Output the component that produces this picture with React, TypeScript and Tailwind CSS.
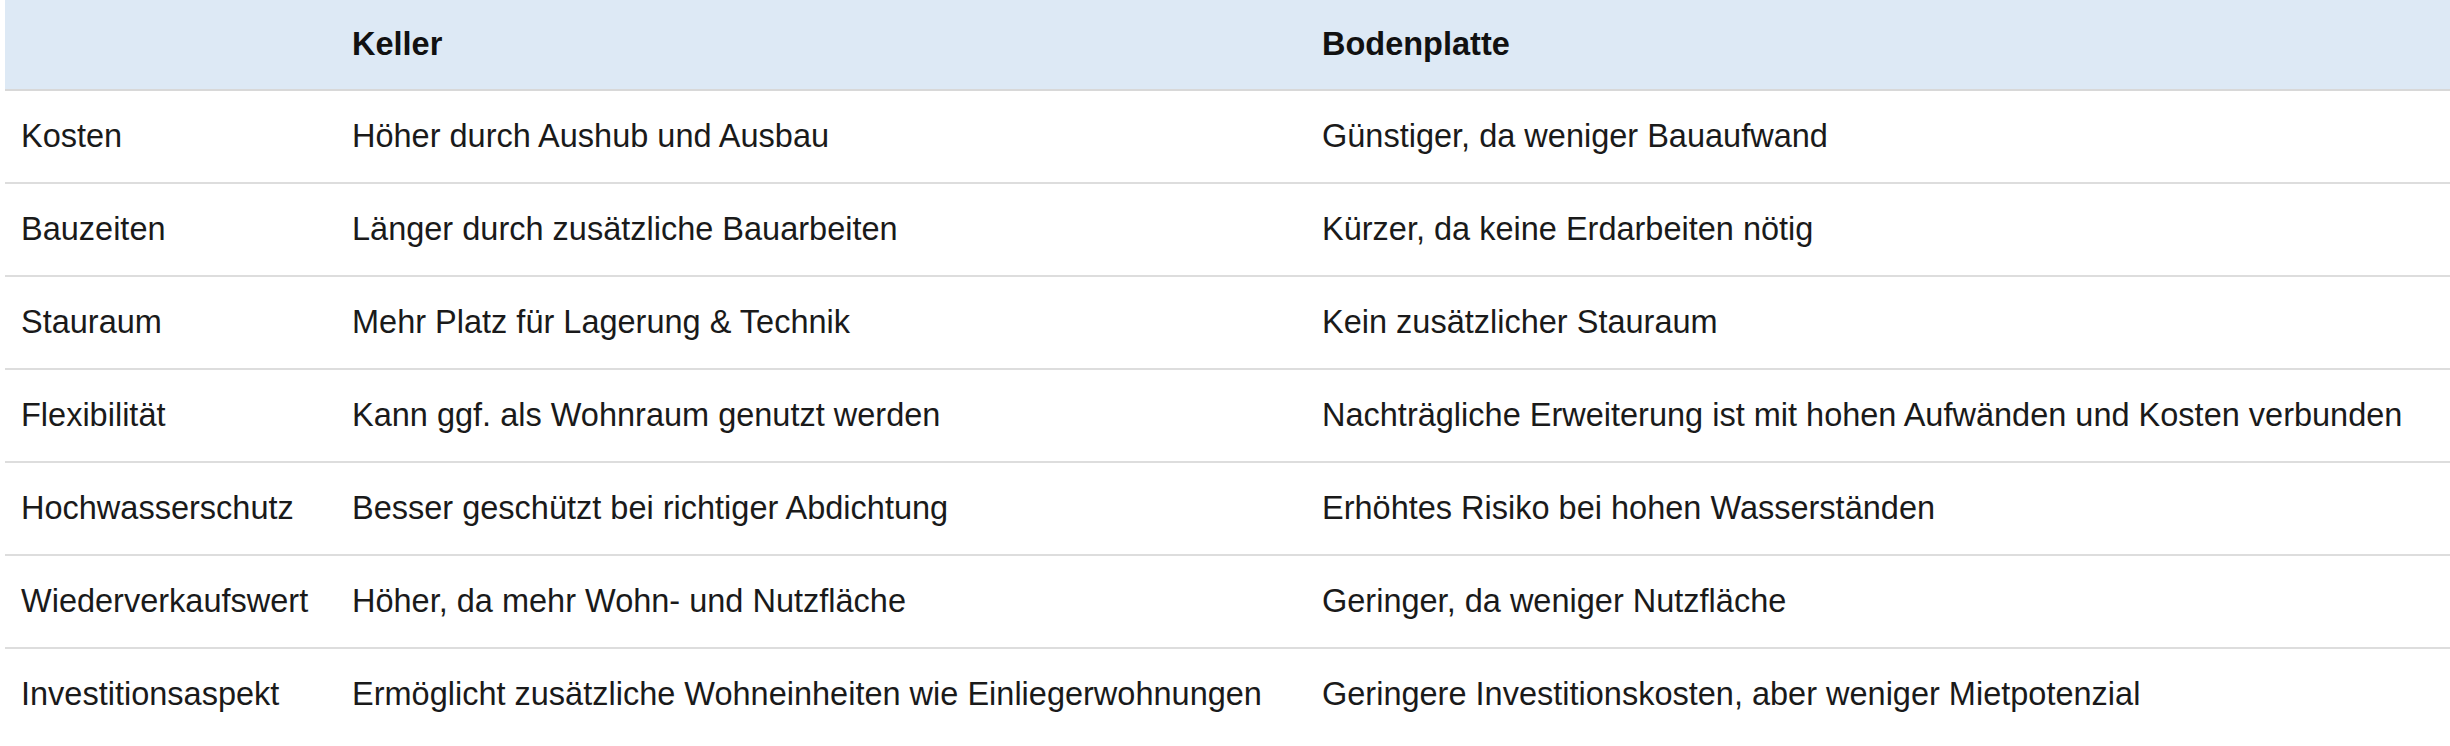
const rows = [
  ["Kosten", "Höher durch Aushub und Ausbau", "Günstiger, da weniger Bauaufwand"],
  ["Bauzeiten", "Länger durch zusätzliche Bauarbeiten", "Kürzer, da keine Erdarbeiten nötig"],
  ["Stauraum", "Mehr Platz für Lagerung & Technik", "Kein zusätzlicher Stauraum"],
  ["Flexibilität", "Kann ggf. als Wohnraum genutzt werden", "Nachträgliche Erweiterung ist mit hohen Aufwänden und Kosten verbunden"],
  ["Hochwasserschutz", "Besser geschützt bei richtiger Abdichtung", "Erhöhtes Risiko bei hohen Wasserständen"],
  ["Wiederverkaufswert", "Höher, da mehr Wohn- und Nutzfläche", "Geringer, da weniger Nutzfläche"],
  ["Investitionsaspekt", "Ermöglicht zusätzliche Wohneinheiten wie Einliegerwohnungen", "Geringere Investitionskosten, aber weniger Mietpotenzial"],
];

export default function App() {
  return (
    <div className="bg-white pl-[5px] font-['Liberation_Sans',Arial,sans-serif] text-[32.5px] leading-[37px] text-[#1a1a1a]">
      <table className="w-full border-collapse text-left">
        <thead>
          <tr className="bg-[#dde9f5] border-b-2 border-[#d8d8d8]">
            <th className="w-[331px] px-4 py-[26px] font-bold"></th>
            <th className="w-[970px] px-4 py-[26px] font-bold text-[#111]">Keller</th>
            <th className="px-4 py-[26px] font-bold text-[#111]">Bodenplatte</th>
          </tr>
        </thead>
        <tbody>
          {rows.map((r, i) => (
            <tr key={r[0]} className={i < rows.length - 1 ? "border-b-2 border-[#dddddd]" : ""}>
              {r.map((c, j) => (
                <td key={j} className="px-4 py-[27px] whitespace-nowrap">
                  {c}
                </td>
              ))}
            </tr>
          ))}
        </tbody>
      </table>
    </div>
  );
}
